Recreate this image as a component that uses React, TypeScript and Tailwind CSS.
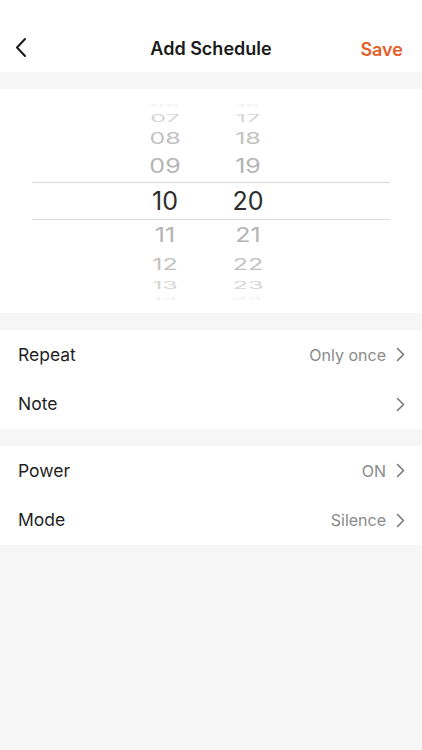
import React from "react";

const font = { fontFamily: "Inter, 'Liberation Sans', sans-serif" };

function Chevron({ className = "" }: { className?: string }) {
  return (
    <svg width="9" height="15" viewBox="0 0 9 15" className={className} fill="none">
      <path d="M1.5 1.5 L7.5 7.5 L1.5 13.5" stroke="currentColor" strokeWidth="1.6" strokeLinecap="round" strokeLinejoin="round" />
    </svg>
  );
}

type Row = { h: string; m: string; height: string; scale: number; color: string; sel?: boolean };

const rows: Row[] = [
  { h: "06", m: "16", height: "h-[10px]", scale: 0.12, color: "#efefef" },
  { h: "07", m: "17", height: "h-[16px]", scale: 0.42, color: "#d6d6d6" },
  { h: "08", m: "18", height: "h-[25px]", scale: 0.66, color: "#c2c2c2" },
  { h: "09", m: "19", height: "h-[31px]", scale: 0.78, color: "#b4b4b4" },
  { h: "10", m: "20", height: "h-[38px]", scale: 1, color: "#2e2e2e", sel: true },
  { h: "11", m: "21", height: "h-[31px]", scale: 0.78, color: "#b4b4b4" },
  { h: "12", m: "22", height: "h-[26px]", scale: 0.66, color: "#c2c2c2" },
  { h: "13", m: "23", height: "h-[16px]", scale: 0.42, color: "#d6d6d6" },
  { h: "14", m: "24", height: "h-[10px]", scale: 0.12, color: "#efefef" },
];

function ListRow({ label, value }: { label: string; value?: string }) {
  return (
    <div className="flex h-[49.5px] items-center justify-between pl-[18px] pr-[17px]">
      <span className="text-[17.5px] text-[#1f1f1f]">{label}</span>
      <div className="flex items-center gap-[10px] text-[#8a8a8a]">
        {value && <span className="text-[16px]">{value}</span>}
        <Chevron className="text-[#7a7a7a]" />
      </div>
    </div>
  );
}

export default function App() {
  return (
    <div className="flex min-h-[750px] w-[422px] flex-col bg-[#f6f6f6]" style={font}>
      <div className="relative flex h-[72px] items-center justify-center bg-white">
        <svg width="14" height="22" viewBox="0 0 14 22" className="absolute left-[14px] top-[37px]" fill="none">
          <path d="M11 2 L3 10.5 L11 19" stroke="#1a1a1a" strokeWidth="2" strokeLinecap="round" strokeLinejoin="round" />
        </svg>
        <span className="mt-[24px] text-[18px] font-semibold text-[#1a1a1a]">Add Schedule</span>
        <span className="absolute right-[19px] top-[36px] text-[18px] font-semibold text-[#e2602a]">Save</span>
      </div>
      <div className="mt-[17px] flex flex-col bg-white pb-[10px] pt-[11px]">
        {rows.map((r) => (
          <div
            key={r.h}
            className={
              "flex items-center overflow-hidden " +
              r.height +
              (r.sel ? " mx-[32px] border-y border-[#d9d9d9] pl-[117px]" : " pl-[149px]")
            }
          >
            <span
              className="inline-block w-[32px] shrink-0 text-center text-[25px] leading-none"
              style={{ color: r.color, transform: `scaleY(${r.scale})` }}
            >
              {r.h}
            </span>
            <span
              className="ml-[51px] inline-block w-[32px] shrink-0 text-center text-[25px] leading-none"
              style={{ color: r.color, transform: `scaleY(${r.scale})` }}
            >
              {r.m}
            </span>
          </div>
        ))}
      </div>
      <div className="mt-[17px] flex flex-col bg-white">
        <ListRow label="Repeat" value="Only once" />
        <ListRow label="Note" />
      </div>
      <div className="mt-[17px] flex flex-col bg-white">
        <ListRow label="Power" value="ON" />
        <ListRow label="Mode" value="Silence" />
      </div>
    </div>
  );
}
